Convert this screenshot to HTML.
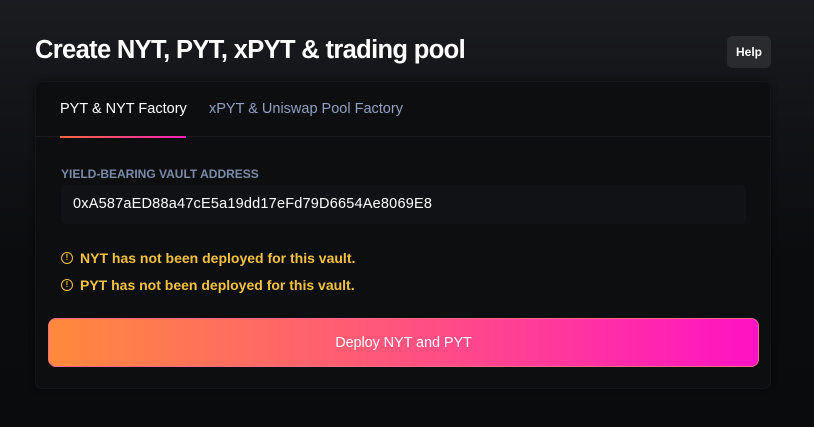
<!DOCTYPE html>
<html><head><style>
*{margin:0;padding:0;box-sizing:border-box}
body{width:814px;height:427px;overflow:hidden;font-family:"Liberation Sans",sans-serif;background:linear-gradient(180deg,#1b1c1f 0%,#121316 120px,#0b0c0e 260px,#0a0b0d 100%);position:relative;color:#fff}
h1{position:absolute;left:35px;top:36px;font-size:25.5px;font-weight:bold;letter-spacing:-0.65px;color:#fff}
.help{position:absolute;left:727px;top:36px;width:44px;height:32px;background:#2a2b2e;border-radius:5px;font-size:12px;font-weight:bold;display:flex;align-items:center;justify-content:center}
.card{position:absolute;left:35px;top:81px;width:736px;height:308px;background:#0d0e10;border:1px solid #15161a;border-radius:7px;box-shadow:0 0 6px rgba(0,0,0,.5)}
.tabs{position:absolute;left:0;top:0;width:100%;height:55px;border-bottom:1px solid #1a1b1f}
.tab{position:absolute;top:19px;font-size:14.5px;letter-spacing:0}
.ul{position:absolute;left:24px;top:54px;width:126px;height:2px;background:linear-gradient(90deg,#ff6a3d,#ff1fb8)}
.lbl{position:absolute;left:25px;top:85px;font-size:12px;font-weight:bold;color:#7a8aa8;letter-spacing:0}
.inp{position:absolute;left:25px;top:103px;width:685px;height:39px;background:#111215;border-radius:5px;font-size:14.5px;padding:11px 12px;letter-spacing:0.2px}
.warn{position:absolute;left:25px;font-size:14px;font-weight:bold;color:#f5c142;letter-spacing:0;display:flex;align-items:center}
.warn span.i{display:inline-block;width:12px;height:12px;border:1.3px solid #f5c142;border-radius:50%;font-size:8px;line-height:9px;text-align:center;margin-right:7px}
.btn{position:absolute;left:12px;top:236px;width:711px;height:49px;border-radius:8px;background:linear-gradient(90deg,#ff8a3c 0%,#ff5f70 40%,#ff3a9a 70%,#ff12c4 100%);border:1px solid #ff6a8a;font-size:14.5px;display:flex;align-items:center;justify-content:center;letter-spacing:-0.1px}
</style></head><body>
<h1>Create NYT, PYT, xPYT &amp; trading pool</h1>
<div class="help">Help</div>
<div class="card">
 <div class="tabs">
  <div class="tab" style="left:24px;color:#fff">PYT &amp; NYT Factory</div>
  <div class="tab" style="left:173px;color:#8fa0c0">xPYT &amp; Uniswap Pool Factory</div>
  <div class="ul"></div>
 </div>
 <div class="lbl">YIELD-BEARING VAULT ADDRESS</div>
 <div class="inp">0xA587aED88a47cE5a19dd17eFd79D6654Ae8069E8</div>
 <div class="warn" style="top:168px"><span class="i">!</span>NYT has not been deployed for this vault.</div>
 <div class="warn" style="top:195px"><span class="i">!</span>PYT has not been deployed for this vault.</div>
 <div class="btn">Deploy NYT and PYT</div>
</div>
</body></html>
